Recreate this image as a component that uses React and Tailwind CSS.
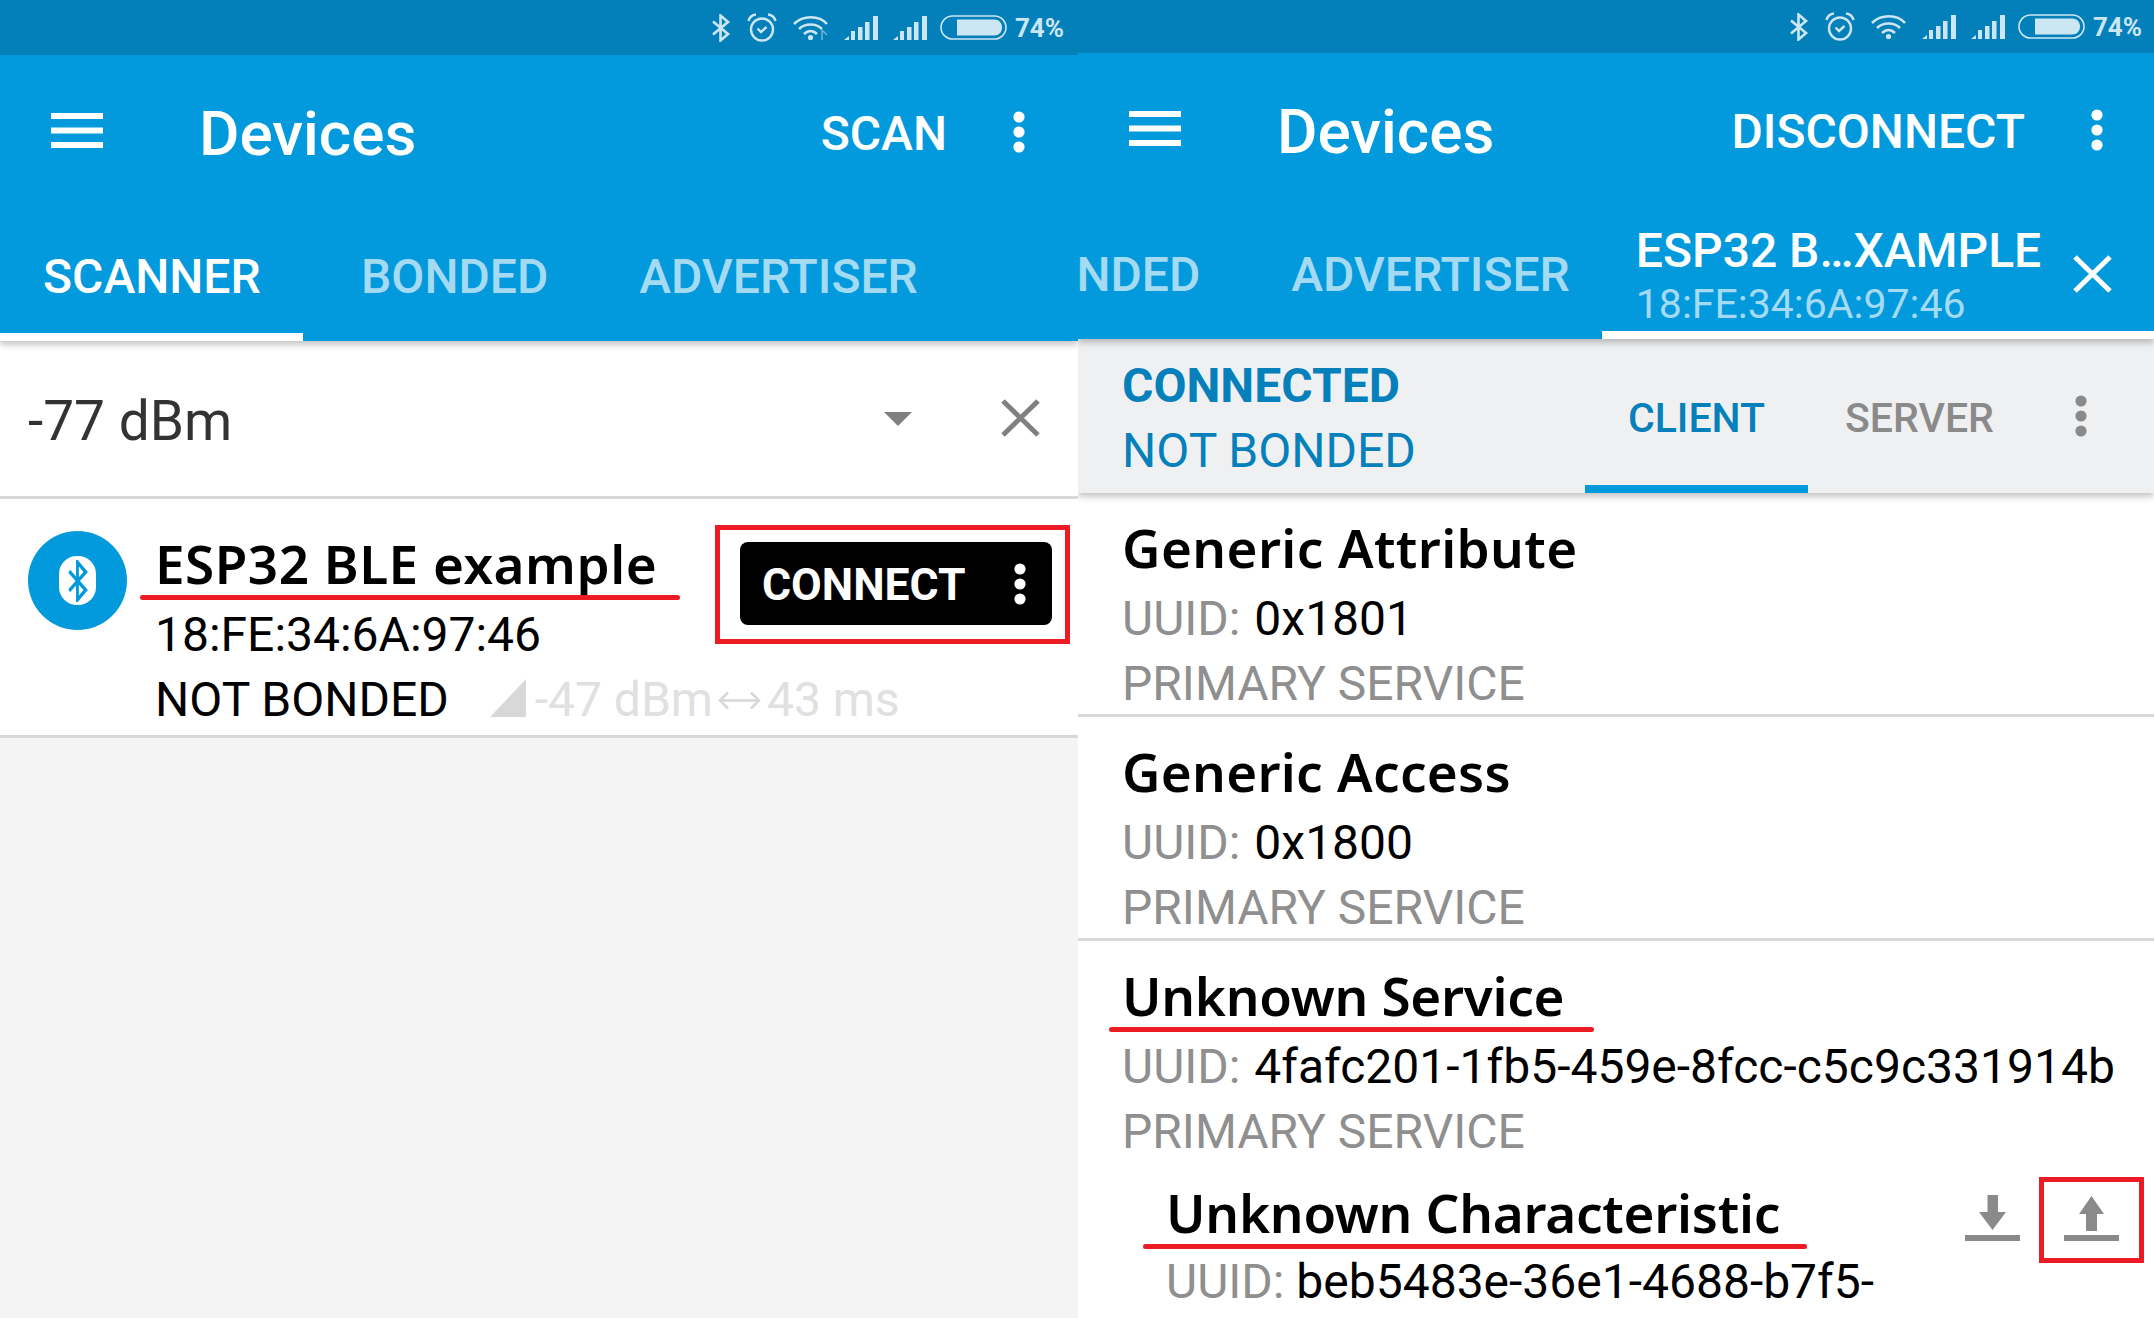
import React from 'react'

function Bluetooth({ className, width = 20, height = 28, sw = 2.6 }) {
  return (
    <svg className={className} width={width} height={height} viewBox="0 0 20 28" preserveAspectRatio="none" fill="none" stroke="currentColor" strokeWidth={sw} strokeLinejoin="miter">
      <polyline points="2,7.5 17,20 9.5,26.5 9.5,1.5 17,8 2,20.5" />
    </svg>
  )
}

function Alarm() {
  return (
    <svg width="30" height="29" viewBox="0 0 30 29" fill="none" stroke="currentColor" strokeWidth="2.4">
      <circle cx="15" cy="16.5" r="11" />
      <polyline points="10.5,15.5 14,19 19.5,14" />
      <path d="M1.5 8 C2.5 4 5 2 9 1.5" />
      <path d="M28.5 8 C27.5 4 25 2 21 1.5" />
    </svg>
  )
}

function Wifi({ arrow }) {
  return (
    <svg width="36" height="26" viewBox="0 0 36 26" fill="none" stroke="currentColor" strokeWidth="2.6">
      <path d="M1 9 C10 0 26 0 34 9" />
      <path d="M6 14 C12 8 23 8 29 14" />
      <path d="M11 19 C15 15 20 15 24 19" />
      <circle cx="17.5" cy="22.5" r="2.6" fill="currentColor" stroke="none" />
      {arrow && <path d="M29 15 L29 25 M29 15 L34 20" strokeWidth="1.6" opacity="0.5" />}
    </svg>
  )
}

function Signal() {
  return (
    <svg width="34" height="24" viewBox="0 0 34 24" fill="currentColor">
      <polygon points="0,24 5,20 5,24" />
      <rect x="7" y="15" width="4" height="9" />
      <rect x="14" y="11" width="4.5" height="13" />
      <rect x="21" y="6" width="4.5" height="18" />
      <rect x="29" y="0" width="5" height="24" />
    </svg>
  )
}

function Battery() {
  return (
    <svg width="67" height="25" viewBox="0 0 67 25" fill="currentColor">
      <rect x="1" y="1" width="65" height="23" rx="11.5" fill="none" stroke="currentColor" strokeWidth="1.6" />
      <path d="M17 4.5 H54 C59 4.5 62 8 62 12.5 C62 17 59 20.5 54 20.5 H17 Z" />
    </svg>
  )
}

function StatusBar({ className, arrow }) {
  return (
    <div className={`flex items-center justify-end bg-[#0380b9] text-[#cde6f3] ${className}`}>
      <Bluetooth />
      <div className="ml-[16px]"><Alarm /></div>
      <div className="ml-[16px]"><Wifi arrow={arrow} /></div>
      <div className="ml-[15px]"><Signal /></div>
      <div className="ml-[15px]"><Signal /></div>
      <div className="ml-[13px]"><Battery /></div>
      <span className="ml-[8px] text-[26px] leading-[26px] font-bold">74%</span>
    </div>
  )
}

function Dots({ className }) {
  return (
    <svg className={className} width="12" height="42" viewBox="0 0 12 42" fill="currentColor">
      <circle cx="6" cy="6" r="5.6" />
      <circle cx="6" cy="21" r="5.6" />
      <circle cx="6" cy="36" r="5.6" />
    </svg>
  )
}

function Close({ className, width = 39, height = 38, sw = 5 }) {
  return (
    <svg className={className} width={width} height={height} viewBox="0 0 39 38" stroke="currentColor" strokeWidth={sw} fill="none">
      <path d="M2 2 L37 36 M37 2 L2 36" />
    </svg>
  )
}

function Hamburger() {
  return (
    <svg width="52" height="35" viewBox="0 0 52 35" fill="currentColor">
      <rect width="52" height="6" />
      <rect y="14.5" width="52" height="6" />
      <rect y="29" width="52" height="6" />
    </svg>
  )
}

function ActionRow({ label, right }) {
  return (
    <div className={`flex h-[150px] items-center pl-[51px] ${right}`}>
      <Hamburger />
      <span className="ml-[96px] pt-[8px] text-[62px] leading-[62px] font-medium">Devices</span>
      <span className="ml-auto pt-[7px] text-[48px] leading-[48px] font-medium">{label}</span>
      <Dots className="ml-[66px] mt-[4px]" />
    </div>
  )
}

function LeftPanel() {
  return (
    <div className="flex h-full w-[1078px] shrink-0 flex-col bg-[#f4f4f4]">
      <div className="relative z-10 shadow-[0_4px_6px_rgba(0,0,0,0.22)]">
        <StatusBar className="h-[55px] pr-[14px]" arrow />
        <div className="h-[286px] bg-[#029add] text-white">
          <ActionRow label="SCAN" right="pr-[53px]" />
          <div className="flex h-[136px] text-[48px] leading-[48px] font-medium text-[#a5daf3]">
            <div className="h-full w-[303px] border-b-[8px] border-white pl-[43px] pt-[48px] text-white">SCANNER</div>
            <div className="ml-[58px] pt-[48px]">BONDED</div>
            <div className="ml-[91px] pt-[48px]">ADVERTISER</div>
          </div>
        </div>
      </div>

      {/* RSSI filter */}
      <div className="flex h-[158px] items-center border-b-[3px] border-[#d8d8d8] bg-white">
        <span className="ml-[28px] pt-[5px] text-[55px] leading-[56px] text-[#333333]">-77 dBm</span>
        <svg className="ml-auto" width="28" height="14" viewBox="0 0 28 14" fill="#808080">
          <polygon points="0,0 28,0 14,14" />
        </svg>
        <Close className="ml-[89px] mr-[38px] mb-[2px] text-[#808080]" />
      </div>

      {/* Device */}
      <div className="flex h-[239px] border-b-[3px] border-[#d8d8d8] bg-white">
        <div className="ml-[28px] mt-[32px] flex h-[99px] w-[99px] shrink-0 items-center justify-center rounded-full bg-[#029add]">
          <div className="flex h-[49px] w-[37px] items-center justify-center rounded-[18px] bg-white text-[#029add]">
            <Bluetooth width={22} height={42} sw={2.6} />
          </div>
        </div>
        <div className="ml-[28px] w-[585px] shrink-0 pt-[38px] whitespace-nowrap">
          <div className="relative font-['Noto_Sans'] text-[53px] leading-[53px] font-semibold tracking-[0.5px] text-black">
            ESP32 BLE example
            <div className="absolute left-[-15px] top-[58px] h-[5px] w-[540px] rounded-full bg-[#ed1c24]" />
          </div>
          <div className="mt-[21px] text-[48px] leading-[48px] text-black">18:FE:34:6A:97:46</div>
          <div className="mt-[17px] flex items-start text-[48px] leading-[48px] text-black">
            <span className="shrink-0">NOT BONDED</span>
            <svg className="ml-[41px] mt-[3px] shrink-0" width="36" height="38" viewBox="0 0 36 38" fill="#d8d8d8">
              <polygon points="0,38 36,0 36,38" />
            </svg>
            <span className="ml-[9px] shrink-0 text-[#e0e0e0]">-47 dBm</span>
            <svg className="ml-[5px] mt-[15px] shrink-0" width="43" height="19" viewBox="0 0 43 19" fill="none" stroke="#d8d8d8" strokeWidth="2.5">
              <path d="M2 9.5 H41 M10 1.5 L2 9.5 L10 17.5 M33 1.5 L41 9.5 L33 17.5" />
            </svg>
            <span className="ml-[6px] shrink-0 text-[#e0e0e0]">43 ms</span>
          </div>
        </div>
        <div className="relative ml-auto mr-[26px] mt-[43px] flex h-[83px] w-[312px] shrink-0 items-center rounded-[8px] bg-black pl-[22px] text-white">
          <span className="pt-[2px] text-[44.5px] leading-[46px] font-bold">CONNECT</span>
          <Dots className="ml-auto mr-[26px]" />
          <div className="absolute -left-[25px] -right-[18px] -top-[17px] -bottom-[19px] border-[5px] border-[#ed1c24]" />
        </div>
      </div>
      <div className="flex-1" />
    </div>
  )
}

function Service({ name, uuid, tracking, line = true }) {
  return (
    <div className={`h-[224px] whitespace-nowrap pl-[44px] pt-[28px] ${line ? 'border-b-[3px] border-[#d8d8d8]' : ''}`}>
      <div className={`font-['Noto_Sans'] text-[53px] leading-[53px] font-semibold text-black ${tracking}`}>
        <span className="relative inline-block">
          {name}
          {!line && <div className="absolute left-[-13px] top-[58px] h-[5px] w-[485px] rounded-full bg-[#ed1c24]" />}
        </span>
      </div>
      <div className="mt-[21px] text-[48px] leading-[48px] text-black">
        <span className="mr-[2px] text-[#8f8f8f]">UUID: </span>{uuid}
      </div>
      <div className="mt-[17px] text-[48px] leading-[48px] text-[#8f8f8f]">PRIMARY SERVICE</div>
    </div>
  )
}

function RightPanel() {
  return (
    <div className="flex h-full w-[1076px] shrink-0 flex-col overflow-hidden bg-white">
      <div className="relative z-20 shadow-[0_4px_6px_rgba(0,0,0,0.22)]">
        <StatusBar className="h-[53px] pr-[12px]" />
        <div className="h-[286px] bg-[#029add] text-white">
          <ActionRow label="DISCONNECT" right="pr-[51px]" />
          <div className="flex h-[136px] text-[48px] leading-[48px] font-medium text-[#a5daf3]">
            <div className="-ml-[65px] pt-[48px]">BONDED</div>
            <div className="ml-[91px] pt-[48px]">ADVERTISER</div>
            <div className="ml-[32px] flex h-full flex-1 border-b-[8px] border-white pl-[34px] pt-[24px]">
              <div className="w-[437px] whitespace-nowrap">
                <div className="text-white">ESP32 B…XAMPLE</div>
                <div className="mt-[9px] text-[41px] leading-[41px] font-normal">18:FE:34:6A:97:46</div>
              </div>
              <Close className="mt-[28px] text-white" />
            </div>
          </div>
        </div>
      </div>

      {/* Connection state + client/server tabs */}
      <div className="relative z-10 flex h-[154px] bg-[#eff0f2] shadow-[0_4px_6px_rgba(0,0,0,0.22)]">
        <div className="w-[507px] pl-[44px] pt-[23px] text-[48px] leading-[48px] text-[#0580bb]">
          <div className="font-bold">CONNECTED</div>
          <div className="mt-[17px]">NOT BONDED</div>
        </div>
        <div className="flex h-full w-[223px] justify-center border-b-[8px] border-[#029add] pt-[59px] text-[41px] leading-[41px] font-medium text-[#0580bb]">CLIENT</div>
        <div className="ml-[37px] pt-[59px] text-[41px] leading-[41px] font-medium text-[#8a8a8a]">SERVER</div>
        <Dots className="ml-[81px] mt-[56px] text-[#8a8a8a]" />
      </div>

      <Service name="Generic Attribute" uuid="0x1801" tracking="tracking-[0.4px]" />
      <Service name="Generic Access" uuid="0x1800" tracking="tracking-[0.3px]" />
      <div className="h-[218px]">
        <Service name="Unknown Service" uuid="4fafc201-1fb5-459e-8fcc-c5c9c331914b" tracking="tracking-[-0.27px]" line={false} />
      </div>

      {/* Characteristic */}
      <div className="flex items-start whitespace-nowrap pl-[88px] pt-[27px]">
        <div>
          <div className="relative font-['Noto_Sans'] text-[53px] leading-[53px] font-semibold tracking-[-0.25px] text-black">
            Unknown Characteristic
            <div className="absolute left-[-23px] top-[58px] h-[5px] w-[664px] rounded-full bg-[#ed1c24]" />
          </div>
          <div className="mt-[19px] text-[48px] leading-[48px] text-black">
            <span className="text-[#8f8f8f]">UUID: </span>beb5483e-36e1-4688-b7f5-
          </div>
        </div>
        <svg className="ml-auto mt-[9px]" width="55" height="46" viewBox="0 0 55 46" fill="#8a8a8a">
          <polygon points="22.5,0 33,0 33,17 41,17 27.5,35 14,17 22.5,17" />
          <rect y="40" width="55" height="6" />
        </svg>
        <div className="relative ml-[44px] mr-[35px] mt-[9px] h-[46px] w-[55px]">
          <svg width="55" height="46" viewBox="0 0 55 46" fill="#8a8a8a">
            <polygon points="27.5,1 40,19 33,19 33,36 22,36 22,19 15,19" />
            <rect y="40" width="55" height="6" />
          </svg>
          <div className="absolute -left-[25px] -right-[25px] -top-[18px] -bottom-[22px] border-[5px] border-[#ed1c24]" />
        </div>
      </div>
    </div>
  )
}

export default function App() {
  return (
    <div className="flex h-[1318px] w-[2154px] overflow-hidden font-['Roboto']">
      <LeftPanel />
      <RightPanel />
    </div>
  )
}
